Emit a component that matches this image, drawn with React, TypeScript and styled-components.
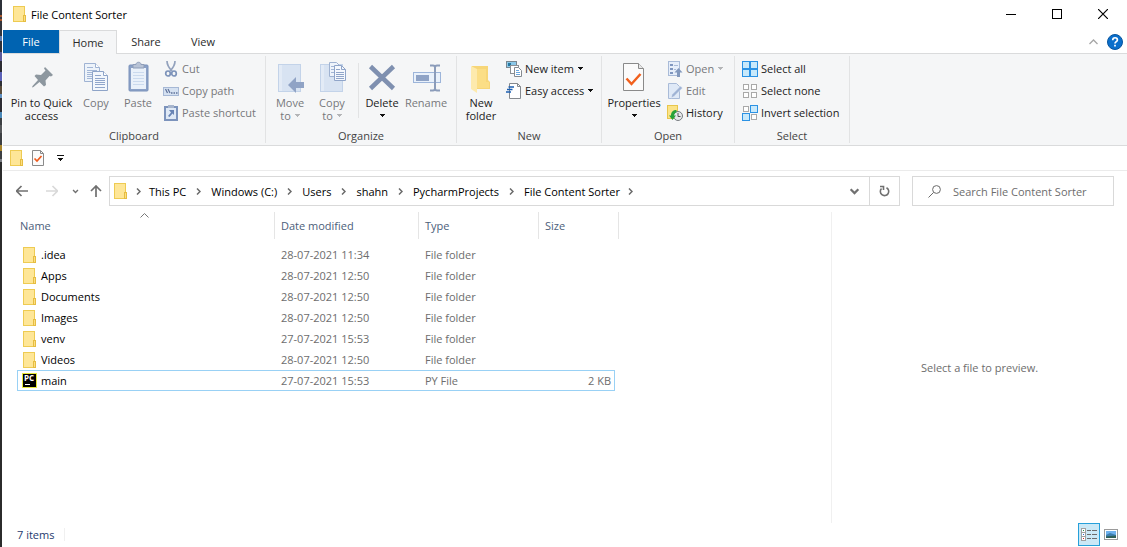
import React from "react";
import styled, { createGlobalStyle } from "styled-components";

const GlobalStyle = createGlobalStyle`
  *, *::before, *::after { box-sizing: border-box; }
  body {
    margin: 0;
    background: #fff;
    color: #1e1e1e;
    font: 11px/13px "Open Sans", "Noto Sans", sans-serif;
  }
  button, input {
    margin: 0;
    padding: 0;
    border: 0;
    background: none;
    color: inherit;
    font: inherit;
  }
  svg { display: block; flex: none; }
`;

const Desktop = styled.div`
  display: grid;
  grid-template-columns: 2px minmax(0, 1fr);
  min-height: 100vh;
`;

const DesktopEdge = styled.div`
  background: linear-gradient(
    #2c3038 0 15px, #a5562c 15px 17px, #3a3c42 17px 19px, #a5562c 19px 21px, #33353c 21px 36px,
    #5b7db0 36px 41px, #2e3038 41px 52px, #5a5a9a 52px 61px, #2c2c33 61px 72px, #5c62b8 72px 81px,
    #2e3036 81px 86px, #5a4c3c 86px 94px, #5f8fc0 94px 98px, #2d2d33 98px 112px, #4a88b8 112px 118px,
    #3c3f42 118px 125px, #55575a 125px 133px, #3c3f42 133px 145px, #a8842a 145px 151px,
    #3c3f42 151px 159px, #7b7e84 159px 162px, #2b2b2b 162px
  );
`;

const Window = styled.main`
  display: flex;
  flex-direction: column;
  min-width: 0;
  padding-left: 1px;
`;

const TitleBar = styled.header`
  display: flex;
  align-items: center;
  height: 30px;
  padding: 0 1px 2px 10px;
`;

const WindowTitle = styled.h1`
  flex: 1;
  margin: 0 0 0 5px;
  font: inherit;
  color: #000;
`;

const CaptionButton = styled.button`
  display: flex;
  align-items: center;
  justify-content: center;
  width: 46px;
  height: 28px;
`;

const TabStrip = styled.div`
  display: flex;
  align-items: flex-end;
  height: 24px;
  border-bottom: 1px solid #dadbdc;
`;

const Tab = styled.button<{ $kind?: "file" | "active" }>`
  width: ${(p) => (p.$kind === "active" ? 58 : 56)}px;
  height: ${(p) => (p.$kind === "active" ? 24 : 23)}px;
  margin-left: ${(p) => (p.$kind ? 0 : 1)}px;
  margin-bottom: ${(p) => (p.$kind === "active" ? -1 : 0)}px;
  border: ${(p) => (p.$kind === "active" ? "1px solid #dadbdc" : "0")};
  border-bottom: 0;
  background: ${(p) => (p.$kind === "file" ? "#0063b1" : p.$kind === "active" ? "#f5f6f7" : "none")};
  color: ${(p) => (p.$kind === "file" ? "#fff" : "#2b2b2b")};
`;

const TabTools = styled.div`
  display: flex;
  align-items: center;
  gap: 9px;
  height: 23px;
  margin-left: auto;
  padding-right: 4px;
`;

const IconButton = styled.button<{ $w?: number }>`
  display: flex;
  align-items: center;
  justify-content: center;
  width: ${(p) => (p.$w ? `${p.$w}px` : "auto")};
`;

const Ribbon = styled.div`
  display: flex;
  height: 92px;
  padding: 2px 0;
  background: #f5f6f7;
  border-bottom: 1px solid #dadbdc;
`;

const Group = styled.section<{ $w: number; $pad: number }>`
  display: flex;
  flex-direction: column;
  width: ${(p) => p.$w}px;
  padding-left: ${(p) => p.$pad}px;
  border-right: 1px solid #e2e3e4;
`;

const GroupTools = styled.div`
  display: flex;
  flex: 1;
`;

const GroupName = styled.h2<{ $pad: number }>`
  margin: 0 0 0 -${(p) => p.$pad}px;
  height: 14px;
  font: inherit;
  text-align: center;
  color: #444;
`;

const BigButton = styled.button<{ $w: number; $off?: boolean }>`
  display: flex;
  flex-direction: column;
  align-items: center;
  gap: 3px;
  width: ${(p) => p.$w}px;
  padding-top: 5px;
  color: ${(p) => (p.$off ? "#77787b" : "#222")};
  white-space: nowrap;
`;

const BigLabel = styled.span`
  display: flex;
  flex-direction: column;
  align-items: center;
`;

const LabelLine = styled.span`
  display: flex;
  align-items: center;
  justify-content: center;
  gap: 4px;
  height: 13px;
`;

const SmallList = styled.div`
  display: flex;
  flex-direction: column;
  margin-left: 4px;
  padding-top: 2px;
`;

const SmallButton = styled.button<{ $off?: boolean }>`
  display: flex;
  align-items: center;
  gap: 3px;
  height: 22px;
  padding-bottom: 1px;
  color: ${(p) => (p.$off ? "#77787b" : "#222")};
  white-space: nowrap;
`;

const ToolDivider = styled.div`
  width: 1px;
  height: 55px;
  margin: 7px 2px 0 5px;
  background: #e2e3e4;
`;

const QuickBar = styled.div`
  display: flex;
  align-items: center;
  height: 25px;
  padding-left: 7px;
  gap: 9px;
  border-bottom: 1px solid #ebebeb;
`;

const AddressRow = styled.div`
  display: flex;
  align-items: center;
  height: 41px;
  padding: 0 13px 1px 4px;
`;

const AddressBar = styled.nav`
  display: flex;
  align-items: center;
  flex: 1;
  min-width: 0;
  height: 30px;
  padding-left: 4px;
  border: 1px solid #d9d9d9;
  color: #000;
`;

const Crumb = styled.button`
  white-space: nowrap;
`;

const CrumbGap = styled.span<{ $first?: boolean }>`
  display: flex;
  justify-content: center;
  width: ${(p) => (p.$first ? 22 : 25)}px;
`;

const AddressTail = styled.div`
  display: flex;
  align-items: stretch;
  height: 28px;
  margin-left: auto;
`;

const RefreshButton = styled(IconButton)`
  border-left: 1px solid #d9d9d9;
`;

const SearchBox = styled.label`
  display: flex;
  align-items: center;
  gap: 12px;
  width: 202px;
  height: 30px;
  margin-left: 12px;
  padding-left: 15px;
  border: 1px solid #d9d9d9;
`;

const SearchInput = styled.input`
  flex: 1;
  min-width: 0;
  outline: 0;
  &::placeholder { color: #6d6d6d; opacity: 1; }
`;

const Body = styled.div`
  display: flex;
  flex: 1;
`;

const FilePane = styled.div`
  flex: 1;
  min-width: 0;
  padding-left: 14px;
`;

const FileTable = styled.table`
  width: 602px;
  table-layout: fixed;
  border-collapse: separate;
  border-spacing: 0;
`;

const Col = styled.col<{ $w: number }>`
  width: ${(p) => p.$w}px;
`;

const HeadCell = styled.th<{ $first?: boolean }>`
  height: 27px;
  padding: 0 0 0 ${(p) => (p.$first ? 3 : 6)}px;
  border-right: 1px solid #e5e5e5;
  color: #4c607a;
  font-weight: 400;
  text-align: left;
`;

const HeadInner = styled.div`
  position: relative;
`;

const SortMark = styled.span`
  position: absolute;
  left: 50%;
  top: -6px;
  margin-left: -7px;
`;

const TableGap = styled.tr`
  height: 5px;
`;

const Cell = styled.td`
  padding: 0;
`;

const CellBox = styled.div<{ $on?: boolean; $edge?: "start" | "end" }>`
  display: flex;
  align-items: center;
  justify-content: ${(p) => (p.$edge === "end" ? "flex-end" : "flex-start")};
  gap: 4px;
  height: 21px;
  margin-right: ${(p) => (p.$edge === "end" ? 4 : 0)}px;
  padding-left: ${(p) => (p.$edge === "start" ? 4 : 6)}px;
  padding-right: ${(p) => (p.$edge === "end" ? 3 : 0)}px;
  border: 0 solid ${(p) => (p.$on ? "#99d1f5" : "transparent")};
  border-width: 1px ${(p) => (p.$edge === "end" ? 1 : 0)}px 1px ${(p) => (p.$edge === "start" ? 1 : 0)}px;
  color: ${(p) => (p.$edge === "start" ? "#000" : "#6d6d6d")};
  white-space: nowrap;
`;

const FileIconSlot = styled.span`
  display: flex;
  justify-content: center;
  width: 15px;
`;

const Preview = styled.aside`
  display: flex;
  align-items: center;
  justify-content: center;
  width: 296px;
  border-left: 1px solid #f0f0f0;
  color: #6d6d6d;
`;

const StatusBar = styled.footer`
  display: flex;
  align-items: center;
  height: 24px;
  padding: 0 9px 1px 14px;
`;

const ItemCount = styled.span`
  padding-right: 10px;
  border-right: 1px solid #f0f0f0;
  color: #1e3a6e;
`;

const ViewButtons = styled.div`
  display: flex;
  gap: 4px;
  margin-left: auto;
`;

const ViewButton = styled.button<{ $on?: boolean }>`
  display: flex;
  align-items: center;
  justify-content: center;
  width: ${(p) => (p.$on ? 22 : 14)}px;
  height: 23px;
  border: ${(p) => (p.$on ? "1px solid #26a0da" : "0")};
  background: ${(p) => (p.$on ? "#cbe8f6" : "none")};
`;

const FolderIcon = () => (
  <svg width="13" height="16" viewBox="0 0 13 16">
    <rect x=".5" y=".5" width="11" height="15" fill="#fee697" stroke="#eecb52" />
    <rect x="10.5" y="9.5" width="2" height="6" fill="#fddf82" stroke="#e6bd42" />
  </svg>
);

const Caret = ({ off }: { off?: boolean }) => (
  <svg width="5" height="3" viewBox="0 0 5 3" shapeRendering="crispEdges">
    <path d="M0 0h5v1H0zM1 1h3v1H1zM2 2h1v1H2z" fill={off ? "#b4b5b7" : "#111"} />
  </svg>
);

const PinIcon = () => (
  <svg width="32" height="32" viewBox="0 0 32 32">
    <path d="M19 6l8 8-2 1.500-1.500-.5-4 4.500.5 4.500-2 1.500-4.500-4.500L7.500 26 6 26.500 6.500 25 12 19l-3.500-4 1.500-1.500 5 .5 4.500-4.500-1.500-2z" fill="#8d979f" />
  </svg>
);

const Sheet = ({ x, y }: { x: number; y: number }) => (
  <g transform={`translate(${x} ${y})`}>
    <path d="M.5.5h11l4 4v14H.5z" fill="#edf3fa" stroke="#9fb3d3" />
    <path d="M11.500.5v4h4" fill="#fff" stroke="#9fb3d3" />
    <path d="M3 4.500h6M3 7.500h10M3 9.500h10M3 11.500h10M3 13.500h10M3 15.500h10" stroke="#a3b7d7" />
  </g>
);

const CopyIcon = () => (
  <svg width="32" height="32" viewBox="0 0 32 32">
    <Sheet x={4} y={2} />
    <g transform="translate(12 10)">
      <path d="M.5.5h11l4 4v15H.5z" fill="#f3f7fc" stroke="#8ea4c8" />
      <path d="M11.500.5v4h4" fill="#fff" stroke="#8ea4c8" />
      <path d="M3 4.500h6M3 7.500h10M3 9.500h10M3 11.500h10M3 13.500h10M3 16.500h10" stroke="#90a6cb" />
    </g>
  </svg>
);

const PasteIcon = () => (
  <svg width="32" height="32" viewBox="0 0 32 32">
    <rect x="7" y="4" width="19" height="26" rx="1" fill="#8ba1c7" stroke="#7b92bb" />
    <rect x="9" y="7" width="15" height="21" fill="#eaf1fa" />
    <path d="M11 11.500h11M11 14.500h11M11 17.500h11M11 20.500h11M11 23.500h11" stroke="#cbdaee" />
    <path d="M11 3.500h3C14 .5 19 .5 19 3.500h3V7H11z" fill="#b8c3d6" stroke="#8e9db8" />
  </svg>
);

const CutIcon = () => (
  <svg width="16" height="16" viewBox="0 0 16 16" fill="none">
    <path d="M4 0c0 4 2 7 5 10M12 0c0 4-2 7-5 10" stroke="#93a2bd" strokeWidth="1.700" />
    <ellipse cx="5" cy="12.500" rx="2.300" ry="2.500" stroke="#7d93ba" strokeWidth="1.700" />
    <ellipse cx="11" cy="12.500" rx="2.300" ry="2.500" stroke="#7d93ba" strokeWidth="1.700" />
  </svg>
);

const CopyPathIcon = () => (
  <svg width="16" height="16" viewBox="0 0 16 16">
    <rect x=".5" y="4.500" width="15" height="8" fill="#d5e1f1" stroke="#a6b8d5" />
    <path d="M2.500 6l2 4M5 6l2 4" stroke="#5f7299" strokeWidth="1.200" />
    <path d="M8 10h1.500M10.500 10H12M13 10h1.500" stroke="#5f7299" strokeWidth="1.500" />
  </svg>
);

const PasteShortcutIcon = () => (
  <svg width="16" height="16" viewBox="0 0 16 16">
    <rect x="2" y="2" width="12" height="13" fill="#dfe9f6" stroke="#7c93bc" strokeWidth="2" />
    <path d="M5 0h6v3H5z" fill="#a7b5cd" />
    <path d="M6 5h5v5L9.500 8.500 6.500 12l-1.500-1 3-3.500z" fill="#6884b5" />
  </svg>
);

const MoveToIcon = () => (
  <svg width="32" height="32" viewBox="0 0 32 32">
    <rect x="4.500" y="3.500" width="22" height="27" fill="#d8e3f2" stroke="#c3d3e9" />
    <rect x="5" y="4" width="3" height="26" fill="#e3ebf6" />
    <path d="M14 24l8-8v5h8v6h-8v5z" fill="#90a3c5" />
  </svg>
);

const CopyToIcon = () => (
  <svg width="32" height="32" viewBox="0 0 32 32">
    <rect x="4.500" y="3.500" width="22" height="27" fill="#d8e3f2" stroke="#c3d3e9" />
    <rect x="5" y="4" width="3" height="26" fill="#e3ebf6" />
    <path d="M13.500 1.500h7l3 3v11h-10z" fill="#eff4fb" stroke="#9fb2d1" />
    <path d="M15 5.500h6M15 8.500h6M15 11.500h6" stroke="#a3b6d5" />
    <path d="M18.500 4.500h7l4 4v11h-11z" fill="#f5f8fd" stroke="#90a5c9" />
    <path d="M25.500 4.500v4h4M20 8.500h4M20 11.500h8M20 13.500h8M20 15.500h8M20 17.500h8" stroke="#90a5c9" fill="none" />
  </svg>
);

const DeleteIcon = () => (
  <svg width="32" height="32" viewBox="0 0 32 32">
    <path d="M4.500 5.500l23 22M27.500 5.500l-23 22" stroke="#7f90b0" strokeWidth="4.500" />
  </svg>
);

const RenameIcon = () => (
  <svg width="32" height="32" viewBox="0 0 32 32" fill="none">
    <rect x="3.500" y="11.500" width="27" height="10" fill="#e9f1fb" stroke="#9db5da" />
    <rect x="6" y="14" width="13" height="6" fill="#8fa3c6" />
    <path d="M20 4.500h3q2 0 2 2v21q0 2-2 2h-3M30 4.500h-3q-2 0-2 2v21q0 2 2 2h3" stroke="#8b9cba" strokeWidth="2" />
  </svg>
);

const NewFolderIcon = () => (
  <svg width="32" height="32" viewBox="0 0 32 32">
    <path d="M7 5h16v14l2 2v7H7z" fill="#f7d678" />
    <path d="M6 5l6 3v24l-6-4z" fill="#fdeaad" />
    <path d="M12 8h9v13h3v6H12z" fill="#fbde86" />
  </svg>
);

const NewItemIcon = () => (
  <svg width="16" height="16" viewBox="0 0 16 16">
    <rect x=".5" y=".5" width="10" height="6" fill="#8cc8e8" stroke="#7a8790" />
    <path d="M2 2h3v3H2z" fill="#27779f" />
    <rect x="4.500" y="4.500" width="8" height="8" fill="#fff" stroke="#8b8f94" />
    <path d="M8.500 6.500h4l3 3v6h-7z" fill="#fff" stroke="#858a90" />
    <path d="M10 9.500h3M10 11.500h4M10 13.500h4" stroke="#6ca7dd" />
  </svg>
);

const EasyAccessIcon = () => (
  <svg width="16" height="16" viewBox="0 0 16 16">
    <path d="M3.500.5h8l3 3v12h-11z" fill="#fff" stroke="#85898e" />
    <path d="M11.500.5v3h3" fill="none" stroke="#85898e" />
    <path d="M2.500 4H8M1 6.500h5.500M0 9h5" stroke="#1c60b3" strokeWidth="1.500" />
  </svg>
);

const PropertiesIcon = ({ small }: { small?: boolean }) =>
  small ? (
    <svg width="12" height="16" viewBox="0 0 12 16">
      <path d="M.5.5h8l3 3v12H.5z" fill="#fbfbfb" stroke="#8a8a8a" />
      <path d="M8.500.5v3h3" fill="none" stroke="#8a8a8a" />
      <path d="M2.500 8.500L5 11l4.500-5" fill="none" stroke="#ee5a1c" strokeWidth="1.700" />
    </svg>
  ) : (
    <svg width="32" height="32" viewBox="0 0 32 32">
      <path d="M5.500 2.500h15l5 5v22h-20z" fill="#fbfbfb" stroke="#8a8a8a" />
      <path d="M20.500 2.500v5h5" fill="#e8e8e8" stroke="#8a8a8a" />
      <path d="M8.500 17.500l5 5.500 9-10" fill="none" stroke="#f1601d" strokeWidth="2.500" />
    </svg>
  );

const OpenIcon = () => (
  <svg width="16" height="16" viewBox="0 0 16 16">
    <rect x="1.500" y=".5" width="11" height="14" fill="#e6eefa" stroke="#a9bbd8" />
    <path d="M3 3h3v2H3zM3 7h3v2H3zM3 11h3v2H3z" fill="#7f96bf" />
    <path d="M7 4.500h4M7 8.500h2" stroke="#a9bbd8" />
    <path d="M11.500 7l4 4.500H13V16h-3v-4.500H7.500z" fill="#8298bd" />
  </svg>
);

const EditIcon = () => (
  <svg width="16" height="16" viewBox="0 0 16 16">
    <path d="M1.500.5h8l3 3v12h-11z" fill="#dfe9f7" stroke="#a9bbd8" />
    <path d="M4 15l1-3.500L13.500 3l2 2L7 13.500z" fill="#9fb3d5" stroke="#f1f5fb" strokeWidth=".5" />
  </svg>
);

const HistoryIcon = () => (
  <svg width="16" height="16" viewBox="0 0 16 16">
    <rect x=".5" y=".5" width="10" height="13" fill="#fbe387" stroke="#e8c64c" />
    <circle cx="11" cy="11" r="4.500" fill="#e6e8ea" stroke="#777c80" />
    <path d="M11 8v3.500h2.500" fill="none" stroke="#555" />
    <path d="M2 10.500h2C4 7 6 5 9.500 5v2.500C8 7.500 7 9 7 10.500h2L5.500 15z" fill="#27a338" />
  </svg>
);

const SelectIcon = ({ on }: { on: number[] }) => (
  <svg width="16" height="16" viewBox="0 0 16 16">
    {[0, 1, 2, 3].map((i) => {
      const lit = on.includes(i);
      const inset = lit ? 0.5 : 1.5;
      const side = lit ? 7 : 5;
      return (
        <rect
          key={i}
          x={(i % 2) * 8 + inset}
          y={(i > 1 ? 8 : 0) + inset}
          width={side}
          height={side}
          fill={lit ? "#c8e9fb" : "#fff"}
          stroke={lit ? "#2b92e4" : "#a9a9a9"}
        />
      );
    })}
  </svg>
);

const CrumbChevron = () => (
  <svg width="5" height="7" viewBox="0 0 5 7" fill="none">
    <path d="M1 .5l3 3-3 3" stroke="#6a6a6a" strokeWidth="1.500" />
  </svg>
);

const DownChevron = ({ size }: { size: number }) => (
  <svg width={size} height={size} viewBox="0 0 10 10" fill="none">
    <path d="M1.500 3L5 6.500 8.500 3" stroke="#707070" strokeWidth="2" />
  </svg>
);

const BackArrow = ({ off }: { off?: boolean }) => (
  <svg width="12" height="12" viewBox="0 0 12 12" fill="none">
    <path
      d={off ? "M0 6h11M6.500 1l5 5-5 5" : "M12 6H1M5.500 1l-5 5 5 5"}
      stroke={off ? "#d9d9d9" : "#707070"}
      strokeWidth="1.700"
    />
  </svg>
);

const PyCharmIcon = () => (
  <svg width="15" height="15" viewBox="0 0 15 15">
    <rect x=".5" y=".5" width="14" height="14" fill="#000" stroke="#e6e83a" />
    <text x="2" y="8" fontFamily="Open Sans, sans-serif" fontSize="8" fontWeight="700" fill="#fff">PC</text>
    <path d="M3 11.500h5" stroke="#fff" />
  </svg>
);

const crumbs = ["This PC", "Windows (C:)", "Users", "shahn", "PycharmProjects", "File Content Sorter"];

const files = [
  { name: ".idea", date: "28-07-2021 11:34", type: "File folder", size: "" },
  { name: "Apps", date: "28-07-2021 12:50", type: "File folder", size: "" },
  { name: "Documents", date: "28-07-2021 12:50", type: "File folder", size: "" },
  { name: "Images", date: "28-07-2021 12:50", type: "File folder", size: "" },
  { name: "venv", date: "27-07-2021 15:53", type: "File folder", size: "" },
  { name: "Videos", date: "28-07-2021 12:50", type: "File folder", size: "" },
  { name: "main", date: "27-07-2021 15:53", type: "PY File", size: "2 KB" },
];

type BigToolProps = {
  icon: React.ReactNode;
  label: string;
  second?: string;
  caret?: boolean;
  off?: boolean;
  w: number;
};

const BigTool = ({ icon, label, second, caret, off, w }: BigToolProps) => (
  <BigButton $w={w} $off={off}>
    {icon}
    <BigLabel>
      <LabelLine>{label}</LabelLine>
      {(second || caret) && (
        <LabelLine>
          {second}
          {caret && <Caret off={off} />}
        </LabelLine>
      )}
    </BigLabel>
  </BigButton>
);

type SmallToolProps = { icon: React.ReactNode; label: string; caret?: boolean; off?: boolean };

const SmallTool = ({ icon, label, caret, off }: SmallToolProps) => (
  <SmallButton $off={off}>
    {icon}
    <LabelLine>
      {label}
      {caret && <Caret off={off} />}
    </LabelLine>
  </SmallButton>
);

type RibbonGroupProps = { name: string; w: number; pad: number; children: React.ReactNode };

const RibbonGroup = ({ name, w, pad, children }: RibbonGroupProps) => (
  <Group $w={w} $pad={pad} aria-label={name}>
    <GroupTools>{children}</GroupTools>
    <GroupName $pad={pad}>{name}</GroupName>
  </Group>
);

export default function App() {
  return (
    <>
      <GlobalStyle />
      <Desktop>
        <DesktopEdge />
        <Window>
          <TitleBar>
            <FolderIcon />
            <WindowTitle>File Content Sorter</WindowTitle>
            <CaptionButton aria-label="Minimize">
              <svg width="10" height="10" viewBox="0 0 10 10"><path d="M0 5.500h10" stroke="#000" /></svg>
            </CaptionButton>
            <CaptionButton aria-label="Maximize">
              <svg width="10" height="10" viewBox="0 0 10 10"><rect x=".5" y=".5" width="9" height="9" fill="none" stroke="#000" /></svg>
            </CaptionButton>
            <CaptionButton aria-label="Close">
              <svg width="10" height="10" viewBox="0 0 10 10"><path d="M0 0l10 10M10 0L0 10" stroke="#000" strokeWidth="1.200" /></svg>
            </CaptionButton>
          </TitleBar>

          <TabStrip>
            <Tab $kind="file">File</Tab>
            <Tab $kind="active">Home</Tab>
            <Tab>Share</Tab>
            <Tab>View</Tab>
            <TabTools>
              <IconButton aria-label="Collapse ribbon">
                <svg width="9" height="6" viewBox="0 0 9 6" fill="none"><path d="M.5 5l4-4 4 4" stroke="#a6a6a6" strokeWidth="1.300" /></svg>
              </IconButton>
              <IconButton aria-label="Help">
                <svg width="16" height="16" viewBox="0 0 16 16">
                  <circle cx="8" cy="8" r="7.500" fill="#0b6fcb" stroke="#08559f" />
                  <path d="M5.700 6.200C5.700 3 10.400 3 10.400 5.900 10.400 7.600 8 7.600 8 9.600M8 10.800v1.800" fill="none" stroke="#fff" strokeWidth="1.700" />
                </svg>
              </IconButton>
            </TabTools>
          </TabStrip>

          <Ribbon>
            <RibbonGroup name="Clipboard" w={263} pad={5}>
              <BigTool w={67} icon={<PinIcon />} label="Pin to Quick" second="access" />
              <BigTool w={42} icon={<CopyIcon />} label="Copy" off />
              <BigTool w={42} icon={<PasteIcon />} label="Paste" off />
              <SmallList>
                <SmallTool icon={<CutIcon />} label="Cut" off />
                <SmallTool icon={<CopyPathIcon />} label="Copy path" off />
                <SmallTool icon={<PasteShortcutIcon />} label="Paste shortcut" off />
              </SmallList>
            </RibbonGroup>
            <RibbonGroup name="Organize" w={191} pad={3}>
              <BigTool w={42} icon={<MoveToIcon />} label="Move" second="to" caret off />
              <BigTool w={42} icon={<CopyToIcon />} label="Copy" second="to" caret off />
              <ToolDivider />
              <BigTool w={42} icon={<DeleteIcon />} label="Delete" caret />
              <BigTool w={46} icon={<RenameIcon />} label="Rename" off />
            </RibbonGroup>
            <RibbonGroup name="New" w={145} pad={3}>
              <BigTool w={42} icon={<NewFolderIcon />} label="New" second="folder" />
              <SmallList>
                <SmallTool icon={<NewItemIcon />} label="New item" caret />
                <SmallTool icon={<EasyAccessIcon />} label="Easy access" caret />
              </SmallList>
            </RibbonGroup>
            <RibbonGroup name="Open" w={133} pad={3}>
              <BigTool w={58} icon={<PropertiesIcon />} label="Properties" caret />
              <SmallList>
                <SmallTool icon={<OpenIcon />} label="Open" caret off />
                <SmallTool icon={<EditIcon />} label="Edit" off />
                <SmallTool icon={<HistoryIcon />} label="History" />
              </SmallList>
            </RibbonGroup>
            <RibbonGroup name="Select" w={115} pad={3}>
              <SmallList>
                <SmallTool icon={<SelectIcon on={[0, 1, 2, 3]} />} label="Select all" />
                <SmallTool icon={<SelectIcon on={[]} />} label="Select none" />
                <SmallTool icon={<SelectIcon on={[1, 2]} />} label="Invert selection" />
              </SmallList>
            </RibbonGroup>
          </Ribbon>

          <QuickBar>
            <IconButton aria-label="New folder"><FolderIcon /></IconButton>
            <IconButton aria-label="Properties"><PropertiesIcon small /></IconButton>
            <IconButton aria-label="Customize toolbar" $w={15}>
              <svg width="7" height="6" viewBox="0 0 7 6" shapeRendering="crispEdges">
                <path d="M0 0h7v1H0zM1 3h5v1H1zM2 4h3v1H2zM3 5h1v1H3z" fill="#111" />
              </svg>
            </IconButton>
          </QuickBar>

          <AddressRow>
            <IconButton aria-label="Back" $w={30}><BackArrow /></IconButton>
            <IconButton aria-label="Forward" $w={30}><BackArrow off /></IconButton>
            <IconButton aria-label="Recent locations" $w={16}><DownChevron size={7} /></IconButton>
            <IconButton aria-label="Up" $w={26}>
              <svg width="12" height="12" viewBox="0 0 12 12" fill="none">
                <path d="M6 12V1M1 6l5-5 5 5" stroke="#707070" strokeWidth="1.700" />
              </svg>
            </IconButton>
            <AddressBar aria-label="Address">
              <FolderIcon />
              {crumbs.map((name, i) => (
                <React.Fragment key={name}>
                  <CrumbGap $first={i === 0}><CrumbChevron /></CrumbGap>
                  <Crumb>{name}</Crumb>
                </React.Fragment>
              ))}
              <CrumbGap $first><CrumbChevron /></CrumbGap>
              <AddressTail>
                <IconButton aria-label="Previous locations" $w={30}><DownChevron size={11} /></IconButton>
                <RefreshButton aria-label="Refresh" $w={30}>
                  <svg width="11" height="12" viewBox="0 0 11 12" fill="none">
                    <path d="M7.500 2.700A4.200 4.200 0 1 1 2.500 3.500M1 1.500h3.500V5" stroke="#707070" strokeWidth="1.600" />
                  </svg>
                </RefreshButton>
              </AddressTail>
            </AddressBar>
            <SearchBox>
              <svg width="13" height="13" viewBox="0 0 13 13" fill="none">
                <circle cx="8.500" cy="4.500" r="3.900" stroke="#6a6a6a" />
                <path d="M5.500 7.500L.5 12.500" stroke="#6a6a6a" />
              </svg>
              <SearchInput aria-label="Search" placeholder="Search File Content Sorter" />
            </SearchBox>
          </AddressRow>

          <Body>
            <FilePane>
              <FileTable>
                <colgroup>
                  <Col $w={258} />
                  <Col $w={144} />
                  <Col $w={120} />
                  <Col $w={80} />
                </colgroup>
                <thead>
                  <tr>
                    <HeadCell $first>
                      <HeadInner>
                        Name
                        <SortMark>
                          <svg width="9" height="5" viewBox="0 0 9 5" fill="none"><path d="M.5 4.500l4-4 4 4" stroke="#777" /></svg>
                        </SortMark>
                      </HeadInner>
                    </HeadCell>
                    <HeadCell>Date modified</HeadCell>
                    <HeadCell>Type</HeadCell>
                    <HeadCell>Size</HeadCell>
                  </tr>
                </thead>
                <tbody>
                  <TableGap />
                  {files.map((f) => {
                    const on = f.name === "main";
                    return (
                      <tr key={f.name}>
                        <Cell>
                          <CellBox $edge="start" $on={on}>
                            <FileIconSlot>{on ? <PyCharmIcon /> : <FolderIcon />}</FileIconSlot>
                            {f.name}
                          </CellBox>
                        </Cell>
                        <Cell><CellBox $on={on}>{f.date}</CellBox></Cell>
                        <Cell><CellBox $on={on}>{f.type}</CellBox></Cell>
                        <Cell><CellBox $edge="end" $on={on}>{f.size}</CellBox></Cell>
                      </tr>
                    );
                  })}
                </tbody>
              </FileTable>
            </FilePane>
            <Preview>Select a file to preview.</Preview>
          </Body>

          <StatusBar>
            <ItemCount>7 items</ItemCount>
            <ViewButtons>
              <ViewButton $on aria-label="Details view">
                <svg width="16" height="13" viewBox="0 0 16 13" shapeRendering="crispEdges">
                  <path d="M.5.5h4v12h-4zM.5 4.500h4M.5 8.500h4" fill="#fff" stroke="#a0a0a0" />
                  <path d="M2 2h1v1H2z" fill="#2a8a4a" />
                  <path d="M2 6h1v1H2z" fill="#2a6ad0" />
                  <path d="M2 10h1v1H2z" fill="#d02a2a" />
                  <path d="M6 2.500h4M11 2.500h5M6 6.500h4M11 6.500h5M6 10.500h4M11 10.500h5" stroke="#6b6b6b" />
                </svg>
              </ViewButton>
              <ViewButton aria-label="Thumbnail view">
                <svg width="14" height="11" viewBox="0 0 14 11">
                  <rect x=".5" y=".5" width="13" height="10" fill="#fff" stroke="#9a9a9a" />
                  <rect x="2" y="2" width="10" height="4" fill="#6fb1ee" />
                  <path d="M2 6l4-2 6 2v3H2z" fill="#3d7fae" />
                  <path d="M2 7.500l10-1V9H2z" fill="#2f5f57" />
                </svg>
              </ViewButton>
            </ViewButtons>
          </StatusBar>
        </Window>
      </Desktop>
    </>
  );
}
